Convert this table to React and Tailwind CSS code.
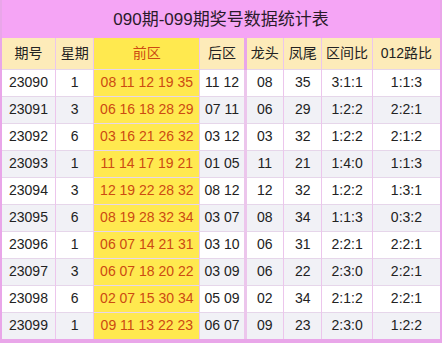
import React from 'react';

const ROWS = [
  ['23090', '1', '08 11 12 19 35', '11 12', '08', '35', '3:1:1', '1:1:3'],
  ['23091', '3', '06 16 18 28 29', '07 11', '06', '29', '1:2:2', '2:2:1'],
  ['23092', '6', '03 16 21 26 32', '03 12', '03', '32', '1:2:2', '2:1:2'],
  ['23093', '1', '11 14 17 19 21', '01 05', '11', '21', '1:4:0', '1:1:3'],
  ['23094', '3', '12 19 22 28 32', '08 12', '12', '32', '1:2:2', '1:3:1'],
  ['23095', '6', '08 19 28 32 34', '03 07', '08', '34', '1:1:3', '0:3:2'],
  ['23096', '1', '06 07 14 21 31', '03 10', '06', '31', '2:2:1', '2:2:1'],
  ['23097', '3', '06 07 18 20 22', '03 09', '06', '22', '2:3:0', '2:2:1'],
  ['23098', '6', '02 07 15 30 34', '05 09', '02', '34', '2:1:2', '2:2:1'],
  ['23099', '1', '09 11 13 22 23', '06 07', '09', '23', '2:3:0', '1:2:2'],
];

const HEAD = ['期号', '星期', '前区', '后区', '龙头', '凤尾', '区间比', '012路比'];
const WIDTHS = ['w-[53px]', 'w-[38px]', 'w-[105px]', 'w-[45px]', 'w-[38px]', 'w-[38px]', 'w-[50px]', 'w-[67px]'];

export default function App() {
  return (
    <div className="w-[442px] h-[343px] bg-[#e9a6e9] px-[2px] pb-[3px] font-['Liberation_Sans','Noto_Sans_CJK_SC',sans-serif] text-[#222]">
      <div className="h-[38px] bg-[#f5a5f5] flex items-center justify-center pt-[2px] text-[17px] text-[#2a1a2a]">
        090期-099期奖号数据统计表
      </div>
      <table className="w-[438px] table-fixed border-collapse text-[14px]">
        <thead>
          <tr className="h-[31px]">
            {HEAD.map((h, i) => (
              <th
                key={h}
                className={`${WIDTHS[i]} font-normal p-0 border-l border-[#ecc6ec] first:border-l-0
                  ${i === 2 ? 'bg-[#ffe94f] text-[#cc4a12]' : 'bg-[#fdebb9] text-[#222]'}
                  ${i === 4 ? 'border-l-[3px] border-l-[#e9a6e9]' : ''}`}
              >
                {h}
              </th>
            ))}
          </tr>
        </thead>
        <tbody>
          {ROWS.map((r, ri) => (
            <tr key={r[0]} className={`h-[27px] ${ri % 2 ? 'bg-[#f1f1f6]' : 'bg-white'}`}>
              {r.map((c, i) => (
                <td
                  key={i}
                  className={`p-0 text-center whitespace-nowrap border-t border-[#e6d6ea] border-l border-l-[#ecc6ec] first:border-l-0
                    ${i === 2 ? 'bg-[#ffe94f] text-[#cc4a12]' : ''}
                    ${i === 4 ? 'border-l-[3px] border-l-[#e9a6e9]' : ''}`}
                >
                  {c}
                </td>
              ))}
            </tr>
          ))}
        </tbody>
      </table>
    </div>
  );
}
